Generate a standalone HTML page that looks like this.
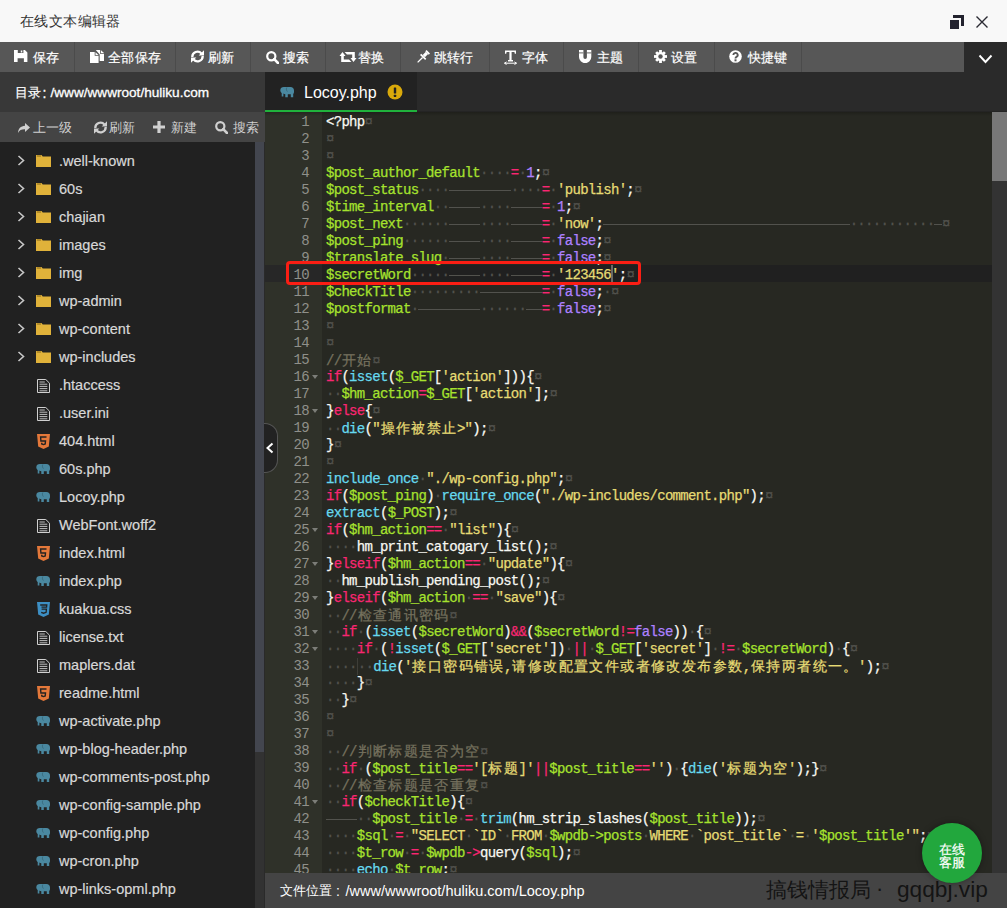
<!DOCTYPE html>
<html><head><meta charset="utf-8">
<style>
*{margin:0;padding:0;box-sizing:border-box}
html,body{width:1007px;height:908px;overflow:hidden;background:#272822;font-family:"Liberation Sans",sans-serif}
.a{position:absolute}
#title{left:0;top:0;width:1007px;height:42px;background:#f8f8f8}
#title .t{left:20px;top:12px;font-size:14px;line-height:18px;color:#333;white-space:nowrap}
#tb{left:0;top:42px;width:964px;height:30px;background:#575757}
#tbr{left:964px;top:42px;width:43px;height:30px;background:#2a2a2a}
.sep{top:42px;width:1px;height:30px;background:#4b4b4b}
.bt{top:49.5px;font-size:13px;letter-spacing:0.3px;line-height:16px;color:#fff;white-space:nowrap;-webkit-text-stroke:0.2px #fff}
.ic{position:absolute}
#dirh{left:0;top:72px;width:265px;height:40px;background:#383838}
#dirh .t{left:16px;top:84px;font-size:14px;line-height:16px;color:#fff;white-space:nowrap}
#sub{left:0;top:112px;width:265px;height:30px;background:#444}
.st{top:120px;font-size:13px;line-height:15px;color:#d0d0d0;white-space:nowrap}
#files{left:0;top:142px;width:265px;height:766px;background:#212121}
#sbt{left:255px;top:142px;width:9px;height:610px;background:#43464f}
#sbk{left:255px;top:752px;width:9px;height:156px;background:#323232}
#sbe{left:264px;top:142px;width:1px;height:766px;background:#2a2a2a}
.fi{left:59px;font-size:14.5px;line-height:16px;color:#d8d8d8;white-space:nowrap;-webkit-text-stroke:0.2px #d8d8d8}
#tabbar{left:265px;top:72px;width:742px;height:40px;background:#2a2a2a}
#tab{left:265px;top:72px;width:152px;height:40px;background:#222}
#tabg{left:265px;top:110px;width:152px;height:2px;background:#20b23c}
#tabt{left:304px;top:83px;font-size:16px;line-height:20px;color:#fff;white-space:nowrap}
#gut{left:265px;top:112px;width:57px;height:761px;background:#2f3129}
#gact{left:265px;top:265px;width:57px;height:17px;background:#272727}
#cact{left:322px;top:265px;width:670px;height:17px;background:#202020}
#vs{left:992px;top:112px;width:15px;height:761px;background:#333}
#vst{left:992px;top:112px;width:15px;height:69px;background:#787878}
.gn{position:absolute;left:265px;width:44px;padding-top:2px;text-align:right;font-family:"Liberation Mono",monospace;font-size:14px;letter-spacing:-0.7px;line-height:17px;color:#8f908a;white-space:pre}
.fold{position:absolute;left:312px;width:0;height:0;border-left:3.5px solid transparent;border-right:3.5px solid transparent;border-top:4px solid #7c7d78;margin-top:8px}
.ln{position:absolute;left:326px;height:17px;padding-top:2px;-webkit-text-stroke:0.25px currentColor;font-family:"Liberation Mono",monospace;font-size:14px;letter-spacing:-0.7px;line-height:17px;color:#f8f8f2;white-space:pre}
.ln b{font-weight:normal}
.w{display:inline-block;width:15.4px;letter-spacing:0;text-align:center;font-family:"Liberation Sans",sans-serif;font-size:14px}
.tb{display:inline-block;height:17px;vertical-align:top;background:linear-gradient(#52524d,#52524d) 0 8px/100% 1px no-repeat}
.ig{display:inline-block;width:0;height:17px;vertical-align:top;border-left:1px solid #3e3e38}
.v{color:#a6e22e}.k{color:#f92672}.f{color:#66d9ef}.s{color:#e6db74}.n{color:#ae81ff}.p{color:#f8f8f2}.c{color:#75715e}.i{color:#52524d}
#foot{left:265px;top:873px;width:742px;height:35px;background:#444}
#foot .t{left:280px;top:882px;font-size:14px;line-height:18px;color:#fff;white-space:nowrap}
#red{left:286px;top:261px;width:355px;height:24px;border:3.5px solid #fa1e14;border-radius:4px}
#kf{left:922px;top:823px;width:60px;height:60px;border-radius:50%;background:#22a73d;box-shadow:0 0 6px rgba(0,0,0,.35)}
#kf div{position:absolute;left:0;width:60px;text-align:center;color:#fff;font-size:12.5px;line-height:15px;-webkit-text-stroke:0.2px #fff}
#wm{left:766px;top:876px;font-size:20.5px;line-height:28px;color:#141414;white-space:nowrap}
#coll{left:264px;top:423px;width:14px;height:50px;background:#222;border:1px solid #555;border-left:none;border-radius:0 13px 13px 0}
</style></head><body>
<div id="title" class="a"></div>
<div class="a" style="left:20px;top:12px;font-size:14px;letter-spacing:0.4px;line-height:18px;color:#333;white-space:nowrap">在线文本编辑器</div>
<svg class="a" style="left:948px;top:13px" width="18" height="18" viewBox="0 0 18 18"><path d="M5 2h11v11h-3V5H5z" fill="#22222e"/><rect x="2" y="7" width="9" height="9" fill="#22222e"/></svg>
<svg class="a" style="left:974px;top:14px" width="16" height="16" viewBox="0 0 16 16"><path d="M2.5 2.5L13.5 13.5M13.5 2.5L2.5 13.5" stroke="#2a2a33" stroke-width="1.4"/></svg>

<div id="tb" class="a"></div>
<div id="tbr" class="a"></div>
<svg class="a" style="left:977px;top:52px" width="17" height="14" viewBox="0 0 17 14"><path d="M2.5 3.5L8.5 10L14.5 3.5" stroke="#fff" stroke-width="1.9" fill="none"/></svg>
<div class="a sep" style="left:74px"></div>
<div class="a sep" style="left:175px"></div>
<div class="a sep" style="left:250px"></div>
<div class="a sep" style="left:325px"></div>
<div class="a sep" style="left:400px"></div>
<div class="a sep" style="left:489px"></div>
<div class="a sep" style="left:563px"></div>
<div class="a sep" style="left:638px"></div>
<div class="a sep" style="left:714px"></div>
<div class="a sep" style="left:801px"></div>
<svg class="a" style="left:14.3px;top:49.8px" width="13.4" height="12.2" viewBox="0 0 13.4 12.2"><path d="M0 0H10.9L13.4 2.5V12.2H9.9V8.2H3.6V12.2H0Z M3.8 0V3H9.4V0Z" fill="#fff" fill-rule="evenodd"/><rect x="6.8" y="0.5" width="1.5" height="2" fill="#fff"/></svg>
<div class="a bt" style="left:33px">保存</div>
<svg class="a" style="left:89.5px;top:50px" width="14.4" height="13" viewBox="0 0 14.4 13"><g fill="#fff"><path d="M0 2H4.7V5.8H8.6V13H0Z"/><path d="M5.5 2.3L8.5 5.1H5.5Z"/><path d="M5.8 0H10.2V3.9H14.4V11H9.7V4.4Z"/><path d="M11 0.3L14.2 3.2H11Z"/></g></svg>
<div class="a bt" style="left:108px">全部保存</div>
<svg class="a" style="left:191px;top:50px" width="13" height="13" viewBox="0 0 13 13"><path d="M1.3 7A5.2 5.2 0 0 1 10.4 3.4" stroke="#fff" stroke-width="2.3" fill="none"/><path d="M13 0.3V5.6H7.7z" fill="#fff"/><path d="M11.7 6A5.2 5.2 0 0 1 2.6 9.6" stroke="#fff" stroke-width="2.3" fill="none"/><path d="M0 12.7V7.4H5.3z" fill="#fff"/></svg>
<div class="a bt" style="left:208px">刷新</div>
<svg class="a" style="left:266px;top:50.5px" width="13" height="13" viewBox="0 0 13 13"><circle cx="5.3" cy="5.3" r="4.1" stroke="#fff" stroke-width="2.2" fill="none"/><path d="M8.2 8.2L12 12" stroke="#fff" stroke-width="2.6" stroke-linecap="round"/></svg>
<div class="a bt" style="left:283px">搜索</div>
<svg class="a" style="left:338.5px;top:52px" width="18" height="10" viewBox="0 0 18 10"><path d="M0.5 4L3.5 0L6.5 4H4.8V7.6H10L12.4 10H2.2V4z" fill="#fff"/><path d="M5.6 0H15.8V6H17.5L14.5 10L11.5 6H13.2V2.4H8z" fill="#fff"/></svg>
<div class="a bt" style="left:358px">替换</div>
<svg class="a" style="left:415.5px;top:49.5px" width="14" height="14" viewBox="0 0 14 14"><g transform="rotate(45 7 7)" fill="#fff"><rect x="4.6" y="-0.5" width="4.8" height="1.8"/><rect x="5.4" y="1.3" width="3.2" height="4.6"/><rect x="3.4" y="5.9" width="7.2" height="1.7"/><rect x="6.35" y="7.6" width="1.3" height="7"/></g></svg>
<div class="a bt" style="left:433.5px">跳转行</div>
<svg class="a" style="left:503.5px;top:49.5px" width="13" height="15" viewBox="0 0 13 15"><path d="M1 0.5h11v3.2h-1.2l-.4-1.6H7.6v8H9v1.3H4V10.1h1.4v-8H2.6l-.4 1.6H1z" fill="#fff"/><path d="M0.5 13.2h12M0.5 13.2l2-1.3M0.5 13.2l2 1.3M12.5 13.2l-2-1.3M12.5 13.2l-2 1.3" stroke="#fff" stroke-width="1"/></svg>
<div class="a bt" style="left:521.5px">字体</div>
<svg class="a" style="left:579.4px;top:49.9px" width="12.3" height="13" viewBox="0 0 12.3 13"><path d="M0 0H4.4V7.2A1.75 1.75 0 0 0 7.9 7.2V0H12.3V7A6.15 6.15 0 0 1 0 7Z" fill="#fff"/><path d="M0 2.9H4.4M7.9 2.9H12.3" stroke="#575757" stroke-width="0.9"/></svg>
<div class="a bt" style="left:597px">主题</div>
<svg class="a" style="left:654px;top:49.9px" width="13" height="13" viewBox="0 0 13 13"><g fill="#fff"><circle cx="6.5" cy="6.5" r="4.6"/><rect x="5.1" y="0" width="2.8" height="13"/><rect x="0" y="5.1" width="13" height="2.8"/><rect x="5.1" y="0.3" width="2.8" height="12.4" transform="rotate(45 6.5 6.5)"/><rect x="5.1" y="0.3" width="2.8" height="12.4" transform="rotate(-45 6.5 6.5)"/></g><circle cx="6.5" cy="6.5" r="2.2" fill="#575757"/></svg>
<div class="a bt" style="left:671px">设置</div>
<svg class="a" style="left:729px;top:49.9px" width="13" height="13" viewBox="0 0 13 13"><circle cx="6.5" cy="6.5" r="6.3" fill="#fff"/><path d="M4.3 5a2.2 2.1 0 1 1 3.2 1.9c-.8.4-1 .8-1 1.5" stroke="#575757" stroke-width="1.9" fill="none"/><rect x="5.5" y="9.3" width="2" height="2" fill="#575757"/></svg>
<div class="a bt" style="left:747.5px">快捷键</div>

<div id="dirh" class="a"></div>
<div class="a" style="left:15px;top:85px;font-size:13.3px;line-height:16px;color:#fff;white-space:nowrap;-webkit-text-stroke:0.2px #fff">目录</div><div class="a" style="left:42.5px;top:85px;font-size:14px;line-height:16px;color:#fff;white-space:nowrap;-webkit-text-stroke:0.3px #fff">:</div><div class="a" style="left:50.5px;top:85px;font-size:13.6px;line-height:16px;color:#fff;white-space:nowrap;-webkit-text-stroke:0.3px #fff">/www/wwwroot/huliku.com</div>
<div id="sub" class="a"></div>
<svg class="a" style="left:18px;top:122.5px" width="12" height="10" viewBox="0 0 12 10"><path d="M7 0l5 4.5L7 9V6.3C3.5 6.2 1.5 7.2 0 10c.3-4.5 2.6-7 7-7.3z" fill="#d0d0d0"/></svg>
<div class="a st" style="left:33px">上一级</div>
<svg class="a" style="left:94px;top:121px" width="12.5" height="12.5" viewBox="0 0 12.5 12.5"><path d="M1.3 7A5.2 5.2 0 0 1 10.4 3.4" stroke="#d0d0d0" stroke-width="2.3" fill="none"/><path d="M13 0.3V5.6H7.7z" fill="#d0d0d0"/><path d="M11.7 6A5.2 5.2 0 0 1 2.6 9.6" stroke="#d0d0d0" stroke-width="2.3" fill="none"/><path d="M0 12.7V7.4H5.3z" fill="#d0d0d0"/></svg>
<div class="a st" style="left:109px">刷新</div>
<svg class="a" style="left:152.5px;top:121px" width="12" height="12" viewBox="0 0 12 12"><path d="M4.4 0h3.2v4.4H12v3.2H7.6V12H4.4V7.6H0V4.4h4.4z" fill="#d0d0d0"/></svg>
<div class="a st" style="left:171px">新建</div>
<svg class="a" style="left:214.5px;top:121px" width="13" height="13" viewBox="0 0 13 13"><circle cx="5.3" cy="5.3" r="4.1" stroke="#d0d0d0" stroke-width="2.2" fill="none"/><path d="M8.2 8.2L12 12" stroke="#d0d0d0" stroke-width="2.6" stroke-linecap="round"/></svg>
<div class="a st" style="left:233px">搜索</div>
<div id="files" class="a"></div>
<div id="sbt" class="a"></div><div id="sbk" class="a"></div><div id="sbe" class="a"></div>
<svg class="a" style="left:17px;top:154.5px" width="8" height="11" viewBox="0 0 8 11"><path d="M1.5 1L6.5 5.5L1.5 10" stroke="#c8c8c8" stroke-width="1.6" fill="none"/></svg>
<svg class="a" style="left:36px;top:154.7px" width="15" height="12.5" viewBox="0 0 15 12.5"><path d="M0 0h5.5l1.2 1.6H15V12.5H0z" fill="#e0b23a"/><path d="M0.8 1h4.2" stroke="#7a5f18" stroke-width="0.9"/></svg>
<div class="a fi" style="top:153px">.well-known</div>
<svg class="a" style="left:17px;top:182.5px" width="8" height="11" viewBox="0 0 8 11"><path d="M1.5 1L6.5 5.5L1.5 10" stroke="#c8c8c8" stroke-width="1.6" fill="none"/></svg>
<svg class="a" style="left:36px;top:182.7px" width="15" height="12.5" viewBox="0 0 15 12.5"><path d="M0 0h5.5l1.2 1.6H15V12.5H0z" fill="#e0b23a"/><path d="M0.8 1h4.2" stroke="#7a5f18" stroke-width="0.9"/></svg>
<div class="a fi" style="top:181px">60s</div>
<svg class="a" style="left:17px;top:210.5px" width="8" height="11" viewBox="0 0 8 11"><path d="M1.5 1L6.5 5.5L1.5 10" stroke="#c8c8c8" stroke-width="1.6" fill="none"/></svg>
<svg class="a" style="left:36px;top:210.7px" width="15" height="12.5" viewBox="0 0 15 12.5"><path d="M0 0h5.5l1.2 1.6H15V12.5H0z" fill="#e0b23a"/><path d="M0.8 1h4.2" stroke="#7a5f18" stroke-width="0.9"/></svg>
<div class="a fi" style="top:209px">chajian</div>
<svg class="a" style="left:17px;top:238.5px" width="8" height="11" viewBox="0 0 8 11"><path d="M1.5 1L6.5 5.5L1.5 10" stroke="#c8c8c8" stroke-width="1.6" fill="none"/></svg>
<svg class="a" style="left:36px;top:238.7px" width="15" height="12.5" viewBox="0 0 15 12.5"><path d="M0 0h5.5l1.2 1.6H15V12.5H0z" fill="#e0b23a"/><path d="M0.8 1h4.2" stroke="#7a5f18" stroke-width="0.9"/></svg>
<div class="a fi" style="top:237px">images</div>
<svg class="a" style="left:17px;top:266.5px" width="8" height="11" viewBox="0 0 8 11"><path d="M1.5 1L6.5 5.5L1.5 10" stroke="#c8c8c8" stroke-width="1.6" fill="none"/></svg>
<svg class="a" style="left:36px;top:266.7px" width="15" height="12.5" viewBox="0 0 15 12.5"><path d="M0 0h5.5l1.2 1.6H15V12.5H0z" fill="#e0b23a"/><path d="M0.8 1h4.2" stroke="#7a5f18" stroke-width="0.9"/></svg>
<div class="a fi" style="top:265px">img</div>
<svg class="a" style="left:17px;top:294.5px" width="8" height="11" viewBox="0 0 8 11"><path d="M1.5 1L6.5 5.5L1.5 10" stroke="#c8c8c8" stroke-width="1.6" fill="none"/></svg>
<svg class="a" style="left:36px;top:294.7px" width="15" height="12.5" viewBox="0 0 15 12.5"><path d="M0 0h5.5l1.2 1.6H15V12.5H0z" fill="#e0b23a"/><path d="M0.8 1h4.2" stroke="#7a5f18" stroke-width="0.9"/></svg>
<div class="a fi" style="top:293px">wp-admin</div>
<svg class="a" style="left:17px;top:322.5px" width="8" height="11" viewBox="0 0 8 11"><path d="M1.5 1L6.5 5.5L1.5 10" stroke="#c8c8c8" stroke-width="1.6" fill="none"/></svg>
<svg class="a" style="left:36px;top:322.7px" width="15" height="12.5" viewBox="0 0 15 12.5"><path d="M0 0h5.5l1.2 1.6H15V12.5H0z" fill="#e0b23a"/><path d="M0.8 1h4.2" stroke="#7a5f18" stroke-width="0.9"/></svg>
<div class="a fi" style="top:321px">wp-content</div>
<svg class="a" style="left:17px;top:350.5px" width="8" height="11" viewBox="0 0 8 11"><path d="M1.5 1L6.5 5.5L1.5 10" stroke="#c8c8c8" stroke-width="1.6" fill="none"/></svg>
<svg class="a" style="left:36px;top:350.7px" width="15" height="12.5" viewBox="0 0 15 12.5"><path d="M0 0h5.5l1.2 1.6H15V12.5H0z" fill="#e0b23a"/><path d="M0.8 1h4.2" stroke="#7a5f18" stroke-width="0.9"/></svg>
<div class="a fi" style="top:349px">wp-includes</div>
<svg class="a" style="left:36.5px;top:378.5px" width="13" height="14" viewBox="0 0 13 14"><path d="M0.5 0.5h8.3l3.7 3.7v9.3H0.5z" stroke="#d0d0d0" stroke-width="1" fill="none"/><path d="M2.5 3h5.3M2.5 5.2h7.8M2.5 7.4h7.8M2.5 9.6h7.8M2.5 11.8h7.8" stroke="#d0d0d0" stroke-width="0.9"/></svg>
<div class="a fi" style="top:377px">.htaccess</div>
<svg class="a" style="left:36.5px;top:406.5px" width="13" height="14" viewBox="0 0 13 14"><path d="M0.5 0.5h8.3l3.7 3.7v9.3H0.5z" stroke="#d0d0d0" stroke-width="1" fill="none"/><path d="M2.5 3h5.3M2.5 5.2h7.8M2.5 7.4h7.8M2.5 9.6h7.8M2.5 11.8h7.8" stroke="#d0d0d0" stroke-width="0.9"/></svg>
<div class="a fi" style="top:405px">.user.ini</div>
<svg class="a" style="left:37px;top:433.5px" width="13" height="15" viewBox="0 0 13 15"><path d="M0 0h13l-1.2 12.5L6.5 15 1.2 12.5z" fill="#e4783a"/><path d="M9.5 3H3.6l.3 4h4.6l-.3 3-1.7.6-1.7-.6-.1-1.3" stroke="#222" stroke-width="1.4" fill="none"/></svg>
<div class="a fi" style="top:433px">404.html</div>
<svg class="a" style="left:35.7px;top:463.5px" width="14" height="10.5" viewBox="0 0 14 10.5"><path d="M0.3 3.2C0.3 1.2 1.8 0 3.8 0H10.5C12.6 0 14 1.5 14 3.5V5.2C14 6 13.6 6.6 13.2 7V10.3H10.8V7.3H7.8V10.3H5.3V7.3C4.5 7.1 3.9 6.9 3.4 6.6V9.6H1.7V6C0.8 5.3 0.3 4.3 0.3 3.2Z" fill="#4a88a0"/><path d="M6.8 0.5C6.2 1.8 6.3 3.4 7.4 4.6" stroke="#2f5868" stroke-width="0.6" fill="none"/></svg>
<div class="a fi" style="top:461px">60s.php</div>
<svg class="a" style="left:35.7px;top:491.5px" width="14" height="10.5" viewBox="0 0 14 10.5"><path d="M0.3 3.2C0.3 1.2 1.8 0 3.8 0H10.5C12.6 0 14 1.5 14 3.5V5.2C14 6 13.6 6.6 13.2 7V10.3H10.8V7.3H7.8V10.3H5.3V7.3C4.5 7.1 3.9 6.9 3.4 6.6V9.6H1.7V6C0.8 5.3 0.3 4.3 0.3 3.2Z" fill="#4a88a0"/><path d="M6.8 0.5C6.2 1.8 6.3 3.4 7.4 4.6" stroke="#2f5868" stroke-width="0.6" fill="none"/></svg>
<div class="a fi" style="top:489px">Locoy.php</div>
<svg class="a" style="left:36.5px;top:518.5px" width="13" height="14" viewBox="0 0 13 14"><path d="M0.5 0.5h8.3l3.7 3.7v9.3H0.5z" stroke="#d0d0d0" stroke-width="1" fill="none"/><path d="M2.5 3h5.3M2.5 5.2h7.8M2.5 7.4h7.8M2.5 9.6h7.8M2.5 11.8h7.8" stroke="#d0d0d0" stroke-width="0.9"/></svg>
<div class="a fi" style="top:517px">WebFont.woff2</div>
<svg class="a" style="left:37px;top:545.5px" width="13" height="15" viewBox="0 0 13 15"><path d="M0 0h13l-1.2 12.5L6.5 15 1.2 12.5z" fill="#e4783a"/><path d="M9.5 3H3.6l.3 4h4.6l-.3 3-1.7.6-1.7-.6-.1-1.3" stroke="#222" stroke-width="1.4" fill="none"/></svg>
<div class="a fi" style="top:545px">index.html</div>
<svg class="a" style="left:35.7px;top:575.5px" width="14" height="10.5" viewBox="0 0 14 10.5"><path d="M0.3 3.2C0.3 1.2 1.8 0 3.8 0H10.5C12.6 0 14 1.5 14 3.5V5.2C14 6 13.6 6.6 13.2 7V10.3H10.8V7.3H7.8V10.3H5.3V7.3C4.5 7.1 3.9 6.9 3.4 6.6V9.6H1.7V6C0.8 5.3 0.3 4.3 0.3 3.2Z" fill="#4a88a0"/><path d="M6.8 0.5C6.2 1.8 6.3 3.4 7.4 4.6" stroke="#2f5868" stroke-width="0.6" fill="none"/></svg>
<div class="a fi" style="top:573px">index.php</div>
<svg class="a" style="left:37px;top:601.5px" width="13" height="15" viewBox="0 0 13 15"><path d="M0 0h13l-1.2 12.5L6.5 15 1.2 12.5z" fill="#3d8fc4"/><path d="M3.2 3h6.6l-.2 2.2H4.5M4.6 7.2h4.8l-.3 3.1-2.5.9-2.4-.8" stroke="#222" stroke-width="1.3" fill="none"/></svg>
<div class="a fi" style="top:601px">kuakua.css</div>
<svg class="a" style="left:36.5px;top:630.5px" width="13" height="14" viewBox="0 0 13 14"><path d="M0.5 0.5h8.3l3.7 3.7v9.3H0.5z" stroke="#d0d0d0" stroke-width="1" fill="none"/><path d="M2.5 3h5.3M2.5 5.2h7.8M2.5 7.4h7.8M2.5 9.6h7.8M2.5 11.8h7.8" stroke="#d0d0d0" stroke-width="0.9"/></svg>
<div class="a fi" style="top:629px">license.txt</div>
<svg class="a" style="left:36.5px;top:658.5px" width="13" height="14" viewBox="0 0 13 14"><path d="M0.5 0.5h8.3l3.7 3.7v9.3H0.5z" stroke="#d0d0d0" stroke-width="1" fill="none"/><path d="M2.5 3h5.3M2.5 5.2h7.8M2.5 7.4h7.8M2.5 9.6h7.8M2.5 11.8h7.8" stroke="#d0d0d0" stroke-width="0.9"/></svg>
<div class="a fi" style="top:657px">maplers.dat</div>
<svg class="a" style="left:37px;top:685.5px" width="13" height="15" viewBox="0 0 13 15"><path d="M0 0h13l-1.2 12.5L6.5 15 1.2 12.5z" fill="#e4783a"/><path d="M9.5 3H3.6l.3 4h4.6l-.3 3-1.7.6-1.7-.6-.1-1.3" stroke="#222" stroke-width="1.4" fill="none"/></svg>
<div class="a fi" style="top:685px">readme.html</div>
<svg class="a" style="left:35.7px;top:715.5px" width="14" height="10.5" viewBox="0 0 14 10.5"><path d="M0.3 3.2C0.3 1.2 1.8 0 3.8 0H10.5C12.6 0 14 1.5 14 3.5V5.2C14 6 13.6 6.6 13.2 7V10.3H10.8V7.3H7.8V10.3H5.3V7.3C4.5 7.1 3.9 6.9 3.4 6.6V9.6H1.7V6C0.8 5.3 0.3 4.3 0.3 3.2Z" fill="#4a88a0"/><path d="M6.8 0.5C6.2 1.8 6.3 3.4 7.4 4.6" stroke="#2f5868" stroke-width="0.6" fill="none"/></svg>
<div class="a fi" style="top:713px">wp-activate.php</div>
<svg class="a" style="left:35.7px;top:743.5px" width="14" height="10.5" viewBox="0 0 14 10.5"><path d="M0.3 3.2C0.3 1.2 1.8 0 3.8 0H10.5C12.6 0 14 1.5 14 3.5V5.2C14 6 13.6 6.6 13.2 7V10.3H10.8V7.3H7.8V10.3H5.3V7.3C4.5 7.1 3.9 6.9 3.4 6.6V9.6H1.7V6C0.8 5.3 0.3 4.3 0.3 3.2Z" fill="#4a88a0"/><path d="M6.8 0.5C6.2 1.8 6.3 3.4 7.4 4.6" stroke="#2f5868" stroke-width="0.6" fill="none"/></svg>
<div class="a fi" style="top:741px">wp-blog-header.php</div>
<svg class="a" style="left:35.7px;top:771.5px" width="14" height="10.5" viewBox="0 0 14 10.5"><path d="M0.3 3.2C0.3 1.2 1.8 0 3.8 0H10.5C12.6 0 14 1.5 14 3.5V5.2C14 6 13.6 6.6 13.2 7V10.3H10.8V7.3H7.8V10.3H5.3V7.3C4.5 7.1 3.9 6.9 3.4 6.6V9.6H1.7V6C0.8 5.3 0.3 4.3 0.3 3.2Z" fill="#4a88a0"/><path d="M6.8 0.5C6.2 1.8 6.3 3.4 7.4 4.6" stroke="#2f5868" stroke-width="0.6" fill="none"/></svg>
<div class="a fi" style="top:769px">wp-comments-post.php</div>
<svg class="a" style="left:35.7px;top:799.5px" width="14" height="10.5" viewBox="0 0 14 10.5"><path d="M0.3 3.2C0.3 1.2 1.8 0 3.8 0H10.5C12.6 0 14 1.5 14 3.5V5.2C14 6 13.6 6.6 13.2 7V10.3H10.8V7.3H7.8V10.3H5.3V7.3C4.5 7.1 3.9 6.9 3.4 6.6V9.6H1.7V6C0.8 5.3 0.3 4.3 0.3 3.2Z" fill="#4a88a0"/><path d="M6.8 0.5C6.2 1.8 6.3 3.4 7.4 4.6" stroke="#2f5868" stroke-width="0.6" fill="none"/></svg>
<div class="a fi" style="top:797px">wp-config-sample.php</div>
<svg class="a" style="left:35.7px;top:827.5px" width="14" height="10.5" viewBox="0 0 14 10.5"><path d="M0.3 3.2C0.3 1.2 1.8 0 3.8 0H10.5C12.6 0 14 1.5 14 3.5V5.2C14 6 13.6 6.6 13.2 7V10.3H10.8V7.3H7.8V10.3H5.3V7.3C4.5 7.1 3.9 6.9 3.4 6.6V9.6H1.7V6C0.8 5.3 0.3 4.3 0.3 3.2Z" fill="#4a88a0"/><path d="M6.8 0.5C6.2 1.8 6.3 3.4 7.4 4.6" stroke="#2f5868" stroke-width="0.6" fill="none"/></svg>
<div class="a fi" style="top:825px">wp-config.php</div>
<svg class="a" style="left:35.7px;top:855.5px" width="14" height="10.5" viewBox="0 0 14 10.5"><path d="M0.3 3.2C0.3 1.2 1.8 0 3.8 0H10.5C12.6 0 14 1.5 14 3.5V5.2C14 6 13.6 6.6 13.2 7V10.3H10.8V7.3H7.8V10.3H5.3V7.3C4.5 7.1 3.9 6.9 3.4 6.6V9.6H1.7V6C0.8 5.3 0.3 4.3 0.3 3.2Z" fill="#4a88a0"/><path d="M6.8 0.5C6.2 1.8 6.3 3.4 7.4 4.6" stroke="#2f5868" stroke-width="0.6" fill="none"/></svg>
<div class="a fi" style="top:853px">wp-cron.php</div>
<svg class="a" style="left:35.7px;top:883.5px" width="14" height="10.5" viewBox="0 0 14 10.5"><path d="M0.3 3.2C0.3 1.2 1.8 0 3.8 0H10.5C12.6 0 14 1.5 14 3.5V5.2C14 6 13.6 6.6 13.2 7V10.3H10.8V7.3H7.8V10.3H5.3V7.3C4.5 7.1 3.9 6.9 3.4 6.6V9.6H1.7V6C0.8 5.3 0.3 4.3 0.3 3.2Z" fill="#4a88a0"/><path d="M6.8 0.5C6.2 1.8 6.3 3.4 7.4 4.6" stroke="#2f5868" stroke-width="0.6" fill="none"/></svg>
<div class="a fi" style="top:881px">wp-links-opml.php</div>

<div id="tabbar" class="a"></div>
<div id="tab" class="a"></div>
<div id="tabg" class="a"></div>
<svg class="a" style="left:280px;top:87px" width="14" height="10.5" viewBox="0 0 14 10.5"><path d="M0.3 3.2C0.3 1.2 1.8 0 3.8 0H10.5C12.6 0 14 1.5 14 3.5V5.2C14 6 13.6 6.6 13.2 7V10.3H10.8V7.3H7.8V10.3H5.3V7.3C4.5 7.1 3.9 6.9 3.4 6.6V9.6H1.7V6C0.8 5.3 0.3 4.3 0.3 3.2Z" fill="#4a88a0"/><path d="M6.8 0.5C6.2 1.8 6.3 3.4 7.4 4.6" stroke="#2f5868" stroke-width="0.6" fill="none"/></svg>
<div id="tabt" class="a">Locoy.php</div>
<svg class="a" style="left:387px;top:84px" width="16" height="16" viewBox="0 0 16 16"><circle cx="8" cy="8" r="7.5" fill="#d9a90b"/><rect x="6.8" y="3.5" width="2.4" height="6" rx="0.6" fill="#222"/><rect x="6.8" y="10.8" width="2.4" height="2.3" rx="0.5" fill="#222"/></svg>

<div class="a" style="left:417px;top:111px;width:590px;height:1px;background:#242424"></div>
<div id="gut" class="a"></div>
<div id="gact" class="a"></div>
<div id="cact" class="a"></div>
<div id="vs" class="a"></div><div id="vst" class="a"></div>
<div class="a" style="left:265px;top:112px;width:727px;height:4px;background:linear-gradient(rgba(0,0,0,.22),rgba(0,0,0,0))"></div>
<div class="gn" style="top:112px">1</div>
<div class="gn" style="top:129px">2</div>
<div class="gn" style="top:146px">3</div>
<div class="gn" style="top:163px">4</div>
<div class="gn" style="top:180px">5</div>
<div class="gn" style="top:197px">6</div>
<div class="gn" style="top:214px">7</div>
<div class="gn" style="top:231px">8</div>
<div class="gn" style="top:248px">9</div>
<div class="gn ga" style="top:265px">10</div>
<div class="gn" style="top:282px">11</div>
<div class="gn" style="top:299px">12</div>
<div class="gn" style="top:316px">13</div>
<div class="gn" style="top:333px">14</div>
<div class="gn" style="top:350px">15</div>
<div class="gn" style="top:367px">16</div>
<div class="fold" style="top:367px"></div>
<div class="gn" style="top:384px">17</div>
<div class="gn" style="top:401px">18</div>
<div class="fold" style="top:401px"></div>
<div class="gn" style="top:418px">19</div>
<div class="gn" style="top:435px">20</div>
<div class="gn" style="top:452px">21</div>
<div class="gn" style="top:469px">22</div>
<div class="gn" style="top:486px">23</div>
<div class="gn" style="top:503px">24</div>
<div class="gn" style="top:520px">25</div>
<div class="fold" style="top:520px"></div>
<div class="gn" style="top:537px">26</div>
<div class="gn" style="top:554px">27</div>
<div class="fold" style="top:554px"></div>
<div class="gn" style="top:571px">28</div>
<div class="gn" style="top:588px">29</div>
<div class="fold" style="top:588px"></div>
<div class="gn" style="top:605px">30</div>
<div class="gn" style="top:622px">31</div>
<div class="fold" style="top:622px"></div>
<div class="gn" style="top:639px">32</div>
<div class="fold" style="top:639px"></div>
<div class="gn" style="top:656px">33</div>
<div class="gn" style="top:673px">34</div>
<div class="gn" style="top:690px">35</div>
<div class="gn" style="top:707px">36</div>
<div class="gn" style="top:724px">37</div>
<div class="gn" style="top:741px">38</div>
<div class="gn" style="top:758px">39</div>
<div class="gn" style="top:775px">40</div>
<div class="gn" style="top:792px">41</div>
<div class="fold" style="top:792px"></div>
<div class="gn" style="top:809px">42</div>
<div class="gn" style="top:826px">43</div>
<div class="gn" style="top:843px">44</div>
<div class="gn" style="top:860px">45</div>
<div class="ln" style="top:112px"><span class="p">&lt;?php</span><span class="i">¤</span></div>
<div class="ln" style="top:129px"><span class="i">¤</span></div>
<div class="ln" style="top:146px"><span class="i">¤</span></div>
<div class="ln" style="top:163px"><span class="v">$post_author_default</span><span class="i">····</span><span class="k">=</span><span class="i">·</span><span class="n">1</span><span class="p">;</span><span class="i">¤</span></div>
<div class="ln" style="top:180px"><span class="v">$post_status</span><span class="i">····</span><b class="tb" style="width:61.60px"></b><span class="i">····</span><span class="k">=</span><span class="i">·</span><span class="s">&#x27;publish&#x27;</span><span class="p">;</span><span class="i">¤</span></div>
<div class="ln" style="top:197px"><span class="v">$time_interval</span><span class="i">··</span><b class="tb" style="width:30.80px"></b><span class="i">····</span><b class="tb" style="width:30.80px"></b><span class="k">=</span><span class="i">·</span><span class="n">1</span><span class="p">;</span><span class="i">¤</span></div>
<div class="ln" style="top:214px"><span class="v">$post_next</span><span class="i">······</span><b class="tb" style="width:30.80px"></b><span class="i">····</span><b class="tb" style="width:30.80px"></b><span class="k">=</span><span class="i">·</span><span class="s">&#x27;now&#x27;</span><span class="p">;</span><b class="tb" style="width:246.40px"></b><span class="i">···········</span><b class="tb" style="width:7.70px"></b><span class="i">¤</span></div>
<div class="ln" style="top:231px"><span class="v">$post_ping</span><span class="i">······</span><b class="tb" style="width:30.80px"></b><span class="i">····</span><b class="tb" style="width:30.80px"></b><span class="k">=</span><span class="i">·</span><span class="n">false</span><span class="p">;</span><span class="i">¤</span></div>
<div class="ln" style="top:248px"><span class="v">$translate_slug</span><span class="i">·</span><b class="tb" style="width:30.80px"></b><span class="i">····</span><b class="tb" style="width:30.80px"></b><span class="k">=</span><span class="i">·</span><span class="n">false</span><span class="p">;</span><span class="i">¤</span></div>
<div class="ln" style="top:265px"><span class="v">$secretWord</span><span class="i">·····</span><b class="tb" style="width:30.80px"></b><span class="i">····</span><b class="tb" style="width:30.80px"></b><span class="k">=</span><span class="i">·</span><span class="s">&#x27;123456&#x27;</span><span class="p">;</span><span class="i">¤</span></div>
<div class="ln" style="top:282px"><span class="v">$checkTitle</span><span class="i">·········</span><b class="tb" style="width:61.60px"></b><span class="k">=</span><span class="i">·</span><span class="n">false</span><span class="p">;</span><span class="i">·¤</span></div>
<div class="ln" style="top:299px"><span class="v">$postformat</span><span class="i">·</span><b class="tb" style="width:61.60px"></b><span class="i">······</span><b class="tb" style="width:15.40px"></b><span class="k">=</span><span class="i">·</span><span class="n">false</span><span class="p">;</span><span class="i">¤</span></div>
<div class="ln" style="top:316px"><span class="i">¤</span></div>
<div class="ln" style="top:333px"><span class="i">¤</span></div>
<div class="ln" style="top:350px"><span class="c">//<b class="w">开</b><b class="w">始</b></span><span class="i">¤</span></div>
<div class="ln" style="top:367px"><span class="k">if</span><span class="p">(</span><span class="f">isset</span><span class="p">(</span><span class="v">$_GET</span><span class="p">[</span><span class="s">&#x27;action&#x27;</span><span class="p">]))</span><span class="p">{</span><span class="i">¤</span></div>
<div class="ln" style="top:384px"><span class="i">··</span><span class="v">$hm_action</span><span class="k">=</span><span class="v">$_GET</span><span class="p">[</span><span class="s">&#x27;action&#x27;</span><span class="p">];</span><span class="i">¤</span></div>
<div class="ln" style="top:401px"><span class="p">}</span><span class="k">else</span><span class="p">{</span><span class="i">¤</span></div>
<div class="ln" style="top:418px"><span class="i">··</span><span class="f">die</span><span class="p">(</span><span class="s">&quot;<b class="w">操</b><b class="w">作</b><b class="w">被</b><b class="w">禁</b><b class="w">止</b>&gt;&quot;</span><span class="p">);</span><span class="i">¤</span></div>
<div class="ln" style="top:435px"><span class="p">}</span><span class="i">¤</span></div>
<div class="ln" style="top:452px"><span class="i">¤</span></div>
<div class="ln" style="top:469px"><span class="f">include_once</span><span class="i">·</span><span class="s">&quot;./wp-config.php&quot;</span><span class="p">;</span><span class="i">¤</span></div>
<div class="ln" style="top:486px"><span class="k">if</span><span class="p">(</span><span class="v">$post_ping</span><span class="p">)</span><span class="i">·</span><span class="f">require_once</span><span class="p">(</span><span class="s">&quot;./wp-includes/comment.php&quot;</span><span class="p">);</span><span class="i">¤</span></div>
<div class="ln" style="top:503px"><span class="f">extract</span><span class="p">(</span><span class="v">$_POST</span><span class="p">);</span><span class="i">¤</span></div>
<div class="ln" style="top:520px"><span class="k">if</span><span class="p">(</span><span class="v">$hm_action</span><span class="k">==</span><span class="i">·</span><span class="s">&quot;list&quot;</span><span class="p">){</span><span class="i">¤</span></div>
<div class="ln" style="top:537px"><span class="i">····</span><span class="p">hm_print_catogary_list();</span><span class="i">¤</span></div>
<div class="ln" style="top:554px"><span class="p">}</span><span class="k">elseif</span><span class="p">(</span><span class="v">$hm_action</span><span class="k">==</span><span class="i">·</span><span class="s">&quot;update&quot;</span><span class="p">){</span><span class="i">¤</span></div>
<div class="ln" style="top:571px"><span class="i">··</span><span class="p">hm_publish_pending_post();</span><span class="i">¤</span></div>
<div class="ln" style="top:588px"><span class="p">}</span><span class="k">elseif</span><span class="p">(</span><span class="v">$hm_action</span><span class="i">·</span><span class="k">==</span><span class="i">·</span><span class="s">&quot;save&quot;</span><span class="p">){</span><span class="i">¤</span></div>
<div class="ln" style="top:605px"><span class="i">··</span><span class="c">//<b class="w">检</b><b class="w">查</b><b class="w">通</b><b class="w">讯</b><b class="w">密</b><b class="w">码</b></span><span class="i">¤</span></div>
<div class="ln" style="top:622px"><span class="i">··</span><span class="k">if</span><span class="i">·</span><span class="p">(</span><span class="f">isset</span><span class="p">(</span><span class="v">$secretWord</span><span class="p">)</span><span class="k">&amp;&amp;</span><span class="p">(</span><span class="v">$secretWord</span><span class="k">!=</span><span class="n">false</span><span class="p">))</span><span class="i">·</span><span class="p">{</span><span class="i">¤</span></div>
<div class="ln" style="top:639px"><span class="i">····</span><span class="k">if</span><span class="i">·</span><span class="p">(</span><span class="k">!</span><span class="f">isset</span><span class="p">(</span><span class="v">$_GET</span><span class="p">[</span><span class="s">&#x27;secret&#x27;</span><span class="p">])</span><span class="i">·</span><span class="k">||</span><span class="i">·</span><span class="v">$_GET</span><span class="p">[</span><span class="s">&#x27;secret&#x27;</span><span class="p">]</span><span class="i">·</span><span class="k">!=</span><span class="i">·</span><span class="v">$secretWord</span><span class="p">)</span><span class="i">·</span><span class="p">{</span><span class="i">¤</span></div>
<div class="ln" style="top:656px"><span class="i">····</span><b class="ig"></b><span class="i">··</span><span class="f">die</span><span class="p">(</span><span class="s">&#x27;<b class="w">接</b><b class="w">口</b><b class="w">密</b><b class="w">码</b><b class="w">错</b><b class="w">误</b>,<b class="w">请</b><b class="w">修</b><b class="w">改</b><b class="w">配</b><b class="w">置</b><b class="w">文</b><b class="w">件</b><b class="w">或</b><b class="w">者</b><b class="w">修</b><b class="w">改</b><b class="w">发</b><b class="w">布</b><b class="w">参</b><b class="w">数</b>,<b class="w">保</b><b class="w">持</b><b class="w">两</b><b class="w">者</b><b class="w">统</b><b class="w">一</b><b class="w">。</b>&#x27;</span><span class="p">);</span><span class="i">¤</span></div>
<div class="ln" style="top:673px"><span class="i">····</span><span class="p">}</span><span class="i">¤</span></div>
<div class="ln" style="top:690px"><span class="i">··</span><span class="p">}</span><span class="i">¤</span></div>
<div class="ln" style="top:707px"><span class="i">¤</span></div>
<div class="ln" style="top:724px"><span class="i">¤</span></div>
<div class="ln" style="top:741px"><span class="i">··</span><span class="c">//<b class="w">判</b><b class="w">断</b><b class="w">标</b><b class="w">题</b><b class="w">是</b><b class="w">否</b><b class="w">为</b><b class="w">空</b></span><span class="i">¤</span></div>
<div class="ln" style="top:758px"><span class="i">··</span><span class="k">if</span><span class="i">·</span><span class="p">(</span><span class="v">$post_title</span><span class="k">==</span><span class="s">&#x27;[<b class="w">标</b><b class="w">题</b>]&#x27;</span><span class="k">||</span><span class="v">$post_title</span><span class="k">==</span><span class="s">&#x27;&#x27;</span><span class="p">)</span><span class="i">·</span><span class="p">{</span><span class="f">die</span><span class="p">(</span><span class="s">&#x27;<b class="w">标</b><b class="w">题</b><b class="w">为</b><b class="w">空</b>&#x27;</span><span class="p">);}</span><span class="i">¤</span></div>
<div class="ln" style="top:775px"><span class="i">··</span><span class="c">//<b class="w">检</b><b class="w">查</b><b class="w">标</b><b class="w">题</b><b class="w">是</b><b class="w">否</b><b class="w">重</b><b class="w">复</b></span><span class="i">¤</span></div>
<div class="ln" style="top:792px"><span class="i">··</span><span class="k">if</span><span class="p">(</span><span class="v">$checkTitle</span><span class="p">){</span><span class="i">¤</span></div>
<div class="ln" style="top:809px"><b class="tb" style="width:30.80px"></b><span class="i">··</span><span class="v">$post_title</span><span class="i">·</span><span class="k">=</span><span class="i">·</span><span class="f">trim</span><span class="p">(hm_strip_slashes(</span><span class="v">$post_title</span><span class="p">));</span><span class="i">¤</span></div>
<div class="ln" style="top:826px"><span class="i">····</span><span class="v">$sql</span><span class="i">·</span><span class="k">=</span><span class="i">·</span><span class="s">&quot;SELECT</span><span class="i">·</span><span class="s">`ID`</span><span class="i">·</span><span class="s">FROM</span><span class="i">·</span><span class="v">$wpdb-&gt;posts</span><span class="i">·</span><span class="s">WHERE</span><span class="i">·</span><span class="s">`post_title`</span><span class="i">·</span><span class="s">=</span><span class="i">·</span><span class="s">&#x27;</span><span class="v">$post_title</span><span class="s">&#x27;&quot;</span><span class="p">;</span><span class="i">¤</span></div>
<div class="ln" style="top:843px"><span class="i">····</span><span class="v">$t_row</span><span class="i">·</span><span class="k">=</span><span class="i">·</span><span class="v">$wpdb</span><span class="k">-&gt;</span><span class="p">query(</span><span class="v">$sql</span><span class="p">);</span><span class="i">¤</span></div>
<div class="ln" style="top:860px"><span class="i">····</span><span class="f">echo</span><span class="i">·</span><span class="v">$t_row</span><span class="p">;</span><span class="i">¤</span></div>
<div class="a" style="left:611px;top:265px;width:1.6px;height:17px;background:#6a6a66"></div>
<div id="red" class="a"></div>
<div id="coll" class="a"></div>
<svg class="a" style="left:265px;top:442px" width="10" height="12" viewBox="0 0 10 12"><path d="M7.5 1.5L2.5 6L7.5 10.5" stroke="#fff" stroke-width="2" fill="none"/></svg>

<div id="foot" class="a"></div>
<div class="a" style="left:279.5px;top:882px;font-size:13.2px;line-height:18px;color:#fff;white-space:nowrap">文件位置</div><div class="a" style="left:336px;top:882px;font-size:14px;line-height:18px;color:#fff;white-space:nowrap">:</div><div class="a" style="left:345.5px;top:882px;font-size:14.5px;line-height:18px;color:#fff;white-space:nowrap">/www/wwwroot/huliku.com/Locoy.php</div>
<div id="wm" class="a">搞钱情报局</div><div class="a" style="left:876px;top:875px;font-size:22px;line-height:28px;color:#141414">·</div><div class="a" style="left:897px;top:875px;font-size:22.7px;line-height:28px;color:#141414;white-space:nowrap">gqqbj.vip</div>
<div id="kf" class="a"><div style="top:19.5px">在线</div><div style="top:32.5px">客服</div></div>
</body></html>
